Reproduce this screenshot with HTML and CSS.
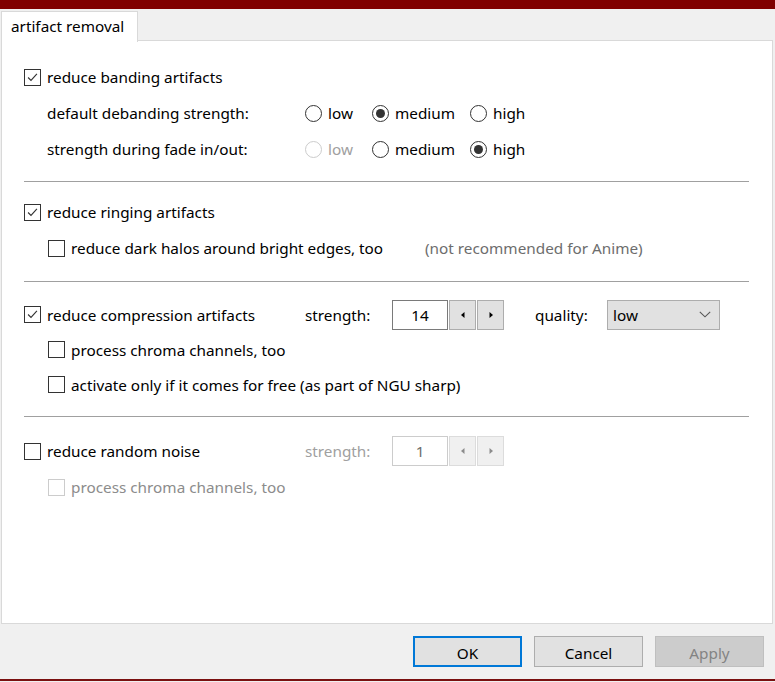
FILE: index.html
```html
<!DOCTYPE html>
<html>
<head>
<meta charset="utf-8">
<link rel="stylesheet" href="styles.css">
</head>
<body>
<div class="top-bar"></div>
<div class="tabs"><div class="tab">artifact removal</div></div>
<div class="panel">
  <div class="section s1">
    <div class="row">
      <span class="box on"><svg viewBox="0 0 17 17"><path d="M3.5 8.5 L6.8 11.8 L13.5 4.5" /></svg></span>
      <span class="txt">reduce banding artifacts</span>
    </div>
    <div class="row lvl2">
      <span class="txt rlabel">default debanding strength:</span>
      <span class="radio r-low"><span class="dot"></span><span class="txt">low</span></span>
      <span class="radio r-med"><span class="dot sel"></span><span class="txt">medium</span></span>
      <span class="radio"><span class="dot"></span><span class="txt">high</span></span>
    </div>
    <div class="row lvl2">
      <span class="txt rlabel">strength during fade in/out:</span>
      <span class="radio r-low disabled"><span class="dot"></span><span class="txt">low</span></span>
      <span class="radio r-med"><span class="dot"></span><span class="txt">medium</span></span>
      <span class="radio"><span class="dot sel"></span><span class="txt">high</span></span>
    </div>
  </div>
  <div class="sep sep1"></div>
  <div class="section">
    <div class="row">
      <span class="box on"><svg viewBox="0 0 17 17"><path d="M3.5 8.5 L6.8 11.8 L13.5 4.5" /></svg></span>
      <span class="txt">reduce ringing artifacts</span>
    </div>
    <div class="row lvl2b">
      <span class="check-wide">
        <span class="box"></span>
        <span class="txt">reduce dark halos around bright edges, too</span>
      </span>
      <span class="txt note">(not recommended for Anime)</span>
    </div>
  </div>
  <div class="sep sep2"></div>
  <div class="section s3">
    <div class="row r35">
      <span class="first-col">
        <span class="box on"><svg viewBox="0 0 17 17"><path d="M3.5 8.5 L6.8 11.8 L13.5 4.5" /></svg></span>
        <span class="txt">reduce compression artifacts</span>
      </span>
      <span class="txt slabel">strength:</span>
      <span class="spin">
        <span class="spin-val">14</span>
        <span class="spin-btn"><svg viewBox="0 0 6 8"><path d="M4.5 1 L1 4 L4.5 7 Z" /></svg></span>
        <span class="spin-btn"><svg viewBox="0 0 6 8"><path d="M1.5 1 L5 4 L1.5 7 Z" /></svg></span>
      </span>
      <span class="txt qlabel">quality:</span>
      <span class="combo"><span class="txt">low</span><svg viewBox="0 0 12 7"><path d="M0.8 0.8 L6 5.8 L11.2 0.8" /></svg></span>
    </div>
    <div class="row r35 lvl2b">
      <span class="box"></span>
      <span class="txt">process chroma channels, too</span>
    </div>
    <div class="row r35 lvl2b">
      <span class="box"></span>
      <span class="txt">activate only if it comes for free (as part of NGU sharp)</span>
    </div>
  </div>
  <div class="sep sep3"></div>
  <div class="section">
    <div class="row">
      <span class="first-col">
        <span class="box"></span>
        <span class="txt">reduce random noise</span>
      </span>
      <span class="txt slabel disabled-txt">strength:</span>
      <span class="spin disabled">
        <span class="spin-val">1</span>
        <span class="spin-btn"><svg viewBox="0 0 6 8"><path d="M4.5 1 L1 4 L4.5 7 Z" /></svg></span>
        <span class="spin-btn"><svg viewBox="0 0 6 8"><path d="M1.5 1 L5 4 L1.5 7 Z" /></svg></span>
      </span>
    </div>
    <div class="row lvl2b">
      <span class="box disabled"></span>
      <span class="txt disabled-txt2">process chroma channels, too</span>
    </div>
  </div>
</div>
<div class="footer">
  <button class="btn default">OK</button>
  <button class="btn">Cancel</button>
  <button class="btn off">Apply</button>
</div>
<div class="bottom-line"></div>
</body>
</html>
```
FILE: styles.css
```css
* { box-sizing: border-box; }
html, body {
  margin: 0;
  padding: 0;
  background: #f0f0f0;
  width: 775px;
  height: 682px;
  overflow: hidden;
  font-family: "Noto Sans", "Open Sans", sans-serif;
  font-size: 15.3px;
  color: #000;
}
.top-bar { height: 9px; background: #800000; }
.tabs {
  height: 32px;
  padding: 2px 0 0 1px;
  display: flex;
}
.tab {
  position: relative;
  z-index: 1;
  height: 31px;
  width: 137px;
  background: #fff;
  border: 1px solid #d9d9d9;
  border-bottom: none;
  padding-left: 9px;
  display: flex;
  align-items: center;
  padding-bottom: 2px;
}
.panel {
  height: 584px;
  margin: -1px 2px 0 1px;
  background: #fff;
  border: 1px solid #d9d9d9;
  padding-left: 22px;
}
.s1 { padding-top: 18px; }
.row {
  height: 36px;
  display: flex;
  align-items: center;
}
.r35 { height: 35px; }
.lvl2 { padding-left: 23px; }
.lvl2b { padding-left: 24px; }
.txt { white-space: nowrap; line-height: 20px; }
.box {
  width: 17px;
  height: 17px;
  border: 1px solid #333;
  background: #fff;
  margin-right: 6px;
  flex: none;
  display: flex;
}
.box svg { width: 15px; height: 15px; }
.box svg path { fill: none; stroke: #333; stroke-width: 1.3; }
.box.disabled { border-color: #ccc; }
.rlabel { width: 258px; }
.radio { display: flex; align-items: center; }
.r-low { width: 67px; }
.r-med { width: 98px; }
.dot {
  width: 17px;
  height: 17px;
  border: 1px solid #333;
  border-radius: 50%;
  margin-right: 6px;
  display: flex;
  align-items: center;
  justify-content: center;
  flex: none;
}
.dot.sel::after {
  content: "";
  width: 9px;
  height: 9px;
  border-radius: 50%;
  background: #333;
}
.radio.disabled .dot { border-color: #ccc; }
.radio.disabled .txt { color: #a0a0a0; }
.sep {
  height: 1px;
  background: #a0a0a0;
  width: 725px;
}
.sep1 { margin-top: 14px; margin-bottom: 12px; }
.sep2 { margin-top: 15px; margin-bottom: 15px; }
.sep3 { margin-top: 14px; margin-bottom: 16px; }
.check-wide { width: 377px; display: flex; align-items: center; }
.note { color: #6d6d6d; }
.first-col { width: 281px; display: flex; align-items: center; }
.slabel { width: 87px; }
.disabled-txt { color: #a0a0a0; }
.disabled-txt2 { color: #8c8c8c; }
.spin { display: flex; height: 30px; }
.spin-val {
  width: 56px;
  height: 30px;
  border: 1px solid #7a7a7a;
  background: #fff;
  display: flex;
  align-items: center;
  justify-content: center;
  margin-right: 1px;
}
.spin-btn {
  width: 27px;
  height: 30px;
  border: 1px solid #adadad;
  background: #e1e1e1;
  display: flex;
  align-items: center;
  justify-content: center;
  margin-right: 1px;
}
.spin-btn svg { width: 6px; height: 8px; }
.spin-btn svg path { fill: #000; }
.spin.disabled .spin-val { border-color: #cccccc; color: #6d6d6d; }
.spin.disabled .spin-btn { border-color: #dcdcdc; background: #f0f0f0; }
.spin.disabled .spin-btn svg path { fill: #8c8c8c; }
.qlabel { margin-left: 30px; width: 72px; }
.combo {
  width: 113px;
  height: 30px;
  border: 1px solid #adadad;
  background: #e1e1e1;
  display: flex;
  align-items: center;
  justify-content: space-between;
  padding: 0 8px 0 5px;
}
.combo svg { width: 12px; height: 7px; }
.combo svg path { fill: none; stroke: #555; stroke-width: 1.1; }
.footer {
  height: 55px;
  display: flex;
  justify-content: flex-end;
  align-items: flex-start;
  padding: 12px 11px 0 0;
  gap: 12px;
}
.btn {
  width: 109px;
  height: 31px;
  font-family: inherit;
  font-size: 15.3px;
  color: #000;
  background: #e1e1e1;
  border: 1px solid #adadad;
  padding: 2px 0 0 0;
}
.btn.default { border: 2px solid #0078d7; }
.btn.off { background: #cccccc; border-color: #bfbfbf; color: #838383; }
.bottom-line { height: 2px; background: #7a1010; }
```
